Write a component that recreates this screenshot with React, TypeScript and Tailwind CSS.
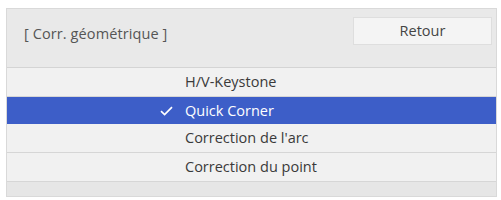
import React from "react";

export default function App() {
  const items = ["H/V-Keystone", "Quick Corner", "Correction de l'arc", "Correction du point"];
  const selected = 1;
  return (
    <div className="w-[501px] h-[200px] bg-white pt-[8px] pl-[6px]" style={{ fontFamily: '"Open Sans", "Noto Sans", sans-serif' }}>
      <div className="w-[491px] h-[189px] border border-[#d9d9d9] bg-[#f1f1f1] flex flex-col">
        <div className="h-[59px] bg-[#e9e9e9] border-b border-[#d4d4d4] flex items-start justify-between pl-[17px] pr-[4px] pt-[8px]">
          <span className="h-[28px] flex items-center mt-[3px] text-[14.5px] text-[#555] tracking-[0.1px]">[ Corr. géométrique ]</span>
          <div className="w-[139px] h-[28px] bg-[#f4f4f4] border border-[#dedede] flex items-center justify-center text-[14.5px] text-[#444]">Retour</div>
        </div>
        {items.map((t, i) => (
          <div
            key={t}
            className={
              i === selected
                ? "h-[27px] bg-[#3d5ec8] flex items-center text-white text-[14.5px]"
                : "h-[29px] border-b border-[#d6d6d6] flex items-center text-[#3a3a3a] text-[14.5px]"
            }
          >
            <div className="w-[174px] flex justify-end pr-[8px]">
              {i === selected && (
                <svg width="13" height="10" viewBox="0 0 13 10" fill="none">
                  <path d="M1 5.2 L4.6 8.6 L12 1.2" stroke="white" strokeWidth="1.7" />
                </svg>
              )}
            </div>
            <span className="pl-[4px]">{t}</span>
          </div>
        ))}
        <div className="flex-1 bg-[#e6e6e6]" />
      </div>
    </div>
  );
}
